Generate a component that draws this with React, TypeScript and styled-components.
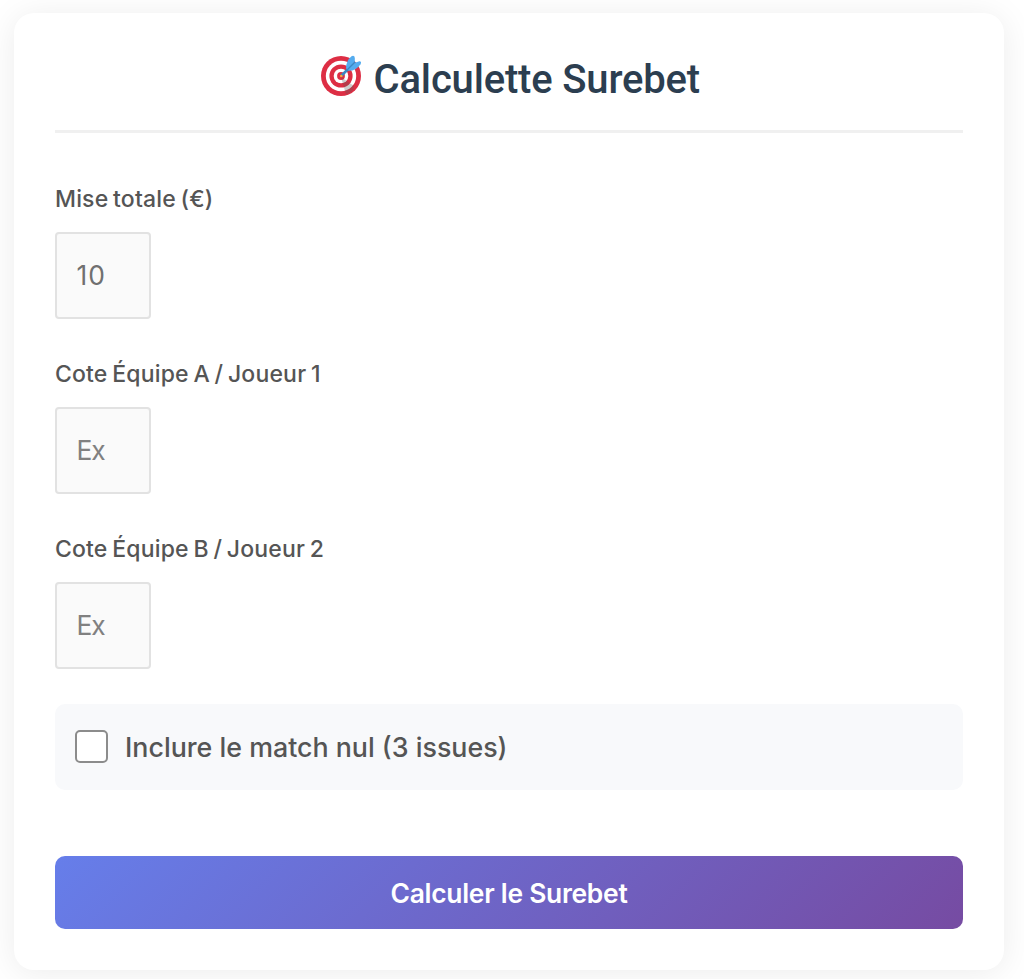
import React from "react";
import styled, { createGlobalStyle } from "styled-components";

const GlobalStyle = createGlobalStyle`
  * { box-sizing: border-box; }
  html, body { margin: 0; background: #fff; overflow: hidden; }
  body { font-family: Inter, "Liberation Sans", sans-serif; color: #555; }
`;

const Page = styled.main`
  height: 979px;
  padding: 12.5px 20px 9.5px 14px;
  overflow: hidden;
`;

const Card = styled.form`
  height: 957px;
  padding: 33.5px 41px 40px;
  border-radius: 20px;
  background: #fff;
  box-shadow: 0 3px 34px rgba(0, 0, 0, 0.08);
  display: flex;
  flex-direction: column;

  > * { flex-shrink: 0; }
`;

const Header = styled.header`
  display: flex;
  justify-content: center;
  height: 87px;
  margin-bottom: 52.5px;
  border-bottom: 3px solid #f0f0f0;
`;

const TargetIcon = styled.svg`
  width: 41px;
  height: 41px;
  margin: 9px 12px 0 2.5px;
`;

const Title = styled.h1`
  margin: 0;
  font: 500 40px/68px Roboto, sans-serif;
  letter-spacing: -0.17px;
  color: #2c3e50;
  white-space: nowrap;
`;

const Field = styled.div`
  display: flex;
  flex-direction: column;
  align-items: flex-start;
  height: 175px;
`;

const Label = styled.label`
  height: 46.5px;
  font-size: 23px;
  font-weight: 500;
  line-height: 27px;
  letter-spacing: 0.17px;
  word-spacing: -1.6px;
  white-space: nowrap;
`;

const NumberInput = styled.input`
  width: 96px;
  height: 87px;
  padding: 0 19.5px 1px;
  border: 2px solid #e2e2e2;
  border-radius: 4px;
  background: #fafafa;
  font: 400 26.4px Inter, sans-serif;
  letter-spacing: 1px;
  color: #707070;
  outline: none;
  &::placeholder { color: #808080; opacity: 1; letter-spacing: -1.2px; }
`;

const Option = styled.label`
  display: flex;
  align-items: center;
  gap: 17px;
  height: 86px;
  padding: 0 20px;
  margin-top: -6.5px;
  border-radius: 10px;
  background: #f8f9fb;
  font-size: 26.8px;
  font-weight: 500;
  line-height: 32px;
  white-space: nowrap;
`;

const Checkbox = styled.input`
  appearance: none;
  width: 33px;
  height: 33px;
  margin: 0 0 1px;
  border: 2px solid #8c8c8c;
  border-radius: 5px;
  background: #fff;
`;

const SubmitButton = styled.button`
  height: 72.5px;
  margin-top: 66px;
  padding: 1px 0 0;
  border: 0;
  border-radius: 10px;
  background: linear-gradient(135deg, #667eea 0%, #764ba2 100%);
  color: #fff;
  font: 600 26.4px Inter, sans-serif;
  letter-spacing: -0.27px;
`;

const fields = [
  { id: "stake", label: "Mise totale (€)", value: "10" },
  { id: "oddsA", label: "Cote Équipe A / Joueur 1", placeholder: "Ex" },
  { id: "oddsB", label: "Cote Équipe B / Joueur 2", placeholder: "Ex" },
];

export default function App() {
  return (
    <Page>
      <GlobalStyle />
      <Card onSubmit={(e) => e.preventDefault()}>
        <Header>
          <TargetIcon viewBox="0 0 41 41" aria-hidden="true">
            <circle cx="20" cy="21" r="20" fill="#dd2e44" />
            <circle cx="20" cy="21" r="15.2" fill="#fff" />
            <circle cx="20" cy="21" r="11.6" fill="#dd2e44" />
            <circle cx="20" cy="21" r="7.3" fill="#fff" />
            <circle cx="20" cy="21" r="3.9" fill="#dd2e44" />
            <path d="M20 22 33 31Q33 37 25 39.5Z" fill="#58595b" opacity=".3" />
            <path d="M20.3 20.7 31 10.2" stroke="#3a87c2" strokeWidth="2.6" />
            <path d="M25 13.5Q25 5.5 30.5 1.2Q33.5 0 33.8 3V8L28 14.8Z" fill="#55acee" />
            <path d="M27 14.8 33.7 7.8 38.5 6.2Q41 6.6 39.5 9.2Q35 16 27.5 15.8Z" fill="#55acee" />
            <path d="M25.5 15.5 34 7" stroke="#3a87c2" strokeWidth="1.3" />
            <circle cx="20.3" cy="21" r="1.3" fill="#ffac33" />
          </TargetIcon>
          <Title>Calculette Surebet</Title>
        </Header>
        {fields.map((f) => (
          <Field key={f.id}>
            <Label htmlFor={f.id}>{f.label}</Label>
            <NumberInput id={f.id} defaultValue={f.value} placeholder={f.placeholder} />
          </Field>
        ))}
        <Option>
          <Checkbox type="checkbox" />
          Inclure le match nul (3 issues)
        </Option>
        <SubmitButton type="submit">Calculer le Surebet</SubmitButton>
      </Card>
    </Page>
  );
}
